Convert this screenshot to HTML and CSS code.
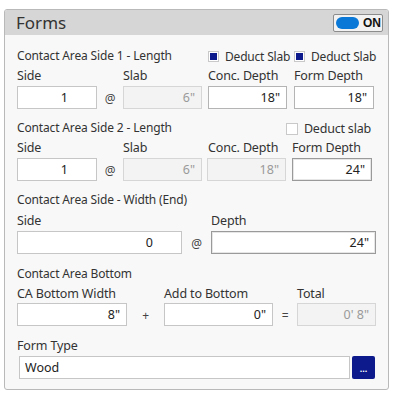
FILE: index.html
```html
<!DOCTYPE html>
<html lang="en">
<head>
	<meta charset="UTF-8">
	<title>Forms</title>
	<link rel="stylesheet" href="styles.css">
</head>
<body>
	<div class="panel">
		<div class="header">
			<div class="title">Forms</div>
			<div class="toggle">
				<span class="pill"></span>
				<span class="state">ON</span>
			</div>
		</div>
		<div class="content">
			<div class="section sides">
				<div class="heading span3">Contact Area Side 1 - Length</div>
				<label class="check"><span class="box checked"></span>Deduct Slab</label>
				<label class="check"><span class="box checked"></span>Deduct Slab</label>
				<div class="label">Side</div>
				<div></div>
				<div class="label">Slab</div>
				<div class="label">Conc. Depth</div>
				<div class="label">Form Depth</div>
				<input class="field num w80" value="1">
				<div class="op">@</div>
				<input class="field w79" value="6&quot;" disabled>
				<input class="field w79 mid" value="18&quot;">
				<input class="field w80 mid" value="18&quot;">
			</div>

			<div class="section sides">
				<div class="heading span4">Contact Area Side 2 - Length</div>
				<label class="check end"><span class="box"></span>Deduct slab</label>
				<div class="label">Side</div>
				<div></div>
				<div class="label">Slab</div>
				<div class="label">Conc. Depth</div>
				<div class="label shift">Form Depth</div>
				<input class="field num w80" value="1">
				<div class="op">@</div>
				<input class="field w79" value="6&quot;" disabled>
				<input class="field w79 back" value="18&quot;" disabled>
				<input class="field w80 dark shift" value="24&quot;">
			</div>

			<div class="section width">
				<div class="heading span3">Contact Area Side - Width (End)</div>
				<div class="label">Side</div>
				<div></div>
				<div class="label">Depth</div>
				<input class="field num" value="0">
				<div class="op">@</div>
				<input class="field dark" value="24&quot;">
			</div>

			<div class="section bottom">
				<div class="heading span5">Contact Area Bottom</div>
				<div class="label">CA Bottom Width</div>
				<div></div>
				<div class="label">Add to Bottom</div>
				<div></div>
				<div class="label">Total</div>
				<input class="field" value="8&quot;">
				<div class="op">+</div>
				<input class="field" value="0&quot;">
				<div class="op">=</div>
				<input class="field" value="0' 8&quot;" disabled>
			</div>

			<div class="section formtype">
				<div class="label span2">Form Type</div>
				<input class="field left" value="Wood">
				<button class="more">...</button>
			</div>
		</div>
	</div>
</body>
</html>
```

FILE: styles.css
```css
html, body {
	margin: 0;
	padding: 0;
	background: #fff;
}
body {
	font-family: "Noto Sans", "Open Sans", sans-serif;
	font-size: 12px;
	letter-spacing: -0.15px;
	color: #333;
}
.panel {
	box-sizing: border-box;
	margin: 9px 0 0 4px;
	width: 385px;
	border: 1px solid #b9b9b9;
	border-radius: 3px;
	background: #f8f8f8;
	overflow: hidden;
}
.header {
	height: 25px;
	background: #d6d6d6;
	display: flex;
	align-items: center;
	justify-content: space-between;
	padding: 0 5px 0 11px;
}
.title {
	font-size: 17px;
	letter-spacing: 0;
	color: #333;
	line-height: 25px;
}
.toggle {
	box-sizing: border-box;
	width: 50px;
	height: 18px;
	border: 1px solid #8c8c8c;
	border-radius: 2px;
	background: #f2f2f2;
	display: flex;
	align-items: center;
	padding-left: 2px;
	margin-top: 1px;
}
.pill {
	width: 23px;
	height: 12px;
	border-radius: 6px;
	background: #0a78d7;
}
.state {
	font-family: "Liberation Sans", sans-serif;
	font-weight: bold;
	font-size: 12px;
	letter-spacing: 0;
	color: #111;
	margin-left: 4px;
}
.content {
	padding: 11px 12px 10px 12px;
}
.section {
	display: grid;
	grid-template-rows: 20px 20px 23px;
	align-items: center;
	margin-bottom: 9px;
}
.section:last-child {
	margin-bottom: 0;
}
.sides {
	grid-template-columns: 80px 26px 85px 86px 80px;
}
.width {
	grid-template-columns: 165px 29px 165px;
	grid-template-rows: 20px 21px 23px;
	margin-bottom: 10px;
}
.bottom {
	grid-template-columns: 110px 37px 109px 24px 79px;
	grid-template-rows: 20px 19px 23px;
}
.formtype {
	grid-template-columns: 332px 27px;
	grid-template-rows: 20px 23px;
	margin-top: 10px;
}
.span2 { grid-column: span 2; }
.span3 { grid-column: span 3; }
.span4 { grid-column: span 4; }
.span5 { grid-column: span 5; }
.heading, .label {
	white-space: nowrap;
	line-height: 20px;
}
.label {
	font-size: 12.5px;
}
.check {
	display: flex;
	align-items: center;
	white-space: nowrap;
	font-size: 12px;
	letter-spacing: -0.2px;
	margin-top: 1px;
}
.check.end {
	justify-content: flex-end;
	margin-right: 3px;
	font-size: 12.5px;
}
.box {
	box-sizing: border-box;
	flex-shrink: 0;
	width: 11px;
	height: 11px;
	border: 1px solid #c9c9c9;
	background: #fff;
	margin-right: 6px;
	display: flex;
	align-items: center;
	justify-content: center;
}
.check.end .box {
	width: 12px;
	height: 12px;
}
.box.checked::after {
	content: "";
	width: 7px;
	height: 7px;
	background: #0c1a8c;
}
.op {
	text-align: center;
	color: #444;
	padding-top: 2px;
}
.field {
	box-sizing: border-box;
	width: 100%;
	height: 23px;
	margin: 0;
	border: 1px solid #c6c6c6;
	background: #fff;
	font-family: inherit;
	font-size: 12.5px;
	letter-spacing: 0;
	color: #222;
	text-align: right;
	padding: 0 6px 0 4px;
	outline: none;
}
.field:disabled {
	background: #f3f3f3;
	border-color: #d6d6d6;
	color: #9a9a9a;
}
.field.num {
	padding-right: 28px;
}
.field.left {
	text-align: left;
	width: 331px;
	margin-left: 2px;
	padding-left: 5px;
}
.field.mid {
	border-color: #b4b4b4;
}
.field.dark {
	border-color: #9a9a9a;
	box-shadow: inset 0 0 0 1px #e6e6e6;
}
.w80 { width: 80px; }
.w79 { width: 79px; }
.back { margin-left: -1px; }
.shift { margin-left: -2px; }
.more {
	box-sizing: border-box;
	width: 23px;
	height: 23px;
	margin: -1px 0 0 3px;
	border: none;
	border-radius: 2px;
	background: #0c1a8c;
	color: #fff;
	font-size: 9px;
	font-weight: bold;
	padding: 4px 0 0 0;
}
```
